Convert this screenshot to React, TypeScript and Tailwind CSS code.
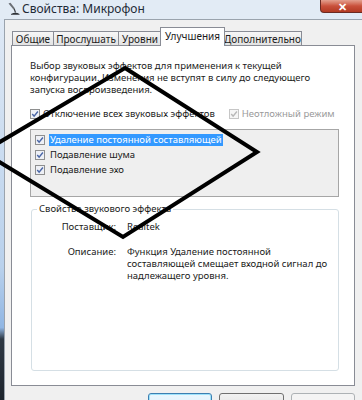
const Check = ({ disabled = false }: { disabled?: boolean }) => (
  <svg width="10" height="10" viewBox="0 0 10 10" className="shrink-0">
    <rect
      x="0.5"
      y="0.5"
      width="9"
      height="9"
      fill={disabled ? "#f6f6f6" : "#eef0f5"}
      stroke={disabled ? "#c6c6c6" : "#8e8f8f"}
    />
    <path
      d="M2.2 5.1 L4.1 7.1 L7.9 2.5"
      fill="none"
      stroke={disabled ? "#b8b8b8" : "#4a66a6"}
      strokeWidth="1.4"
    />
  </svg>
);

const MicIcon = () => (
  <svg width="13" height="13" viewBox="0 0 13 13">
    <path d="M1.5 1.5 L3.5 0.8 L8 6.5 L6.5 7.5 Z" fill="#6b6f75" />
    <path d="M7.2 7 L8.5 10.5" stroke="#3a3d42" strokeWidth="1.2" />
    <path d="M4 12 Q8.5 9.5 12.5 12 L12.5 12.8 L4 12.8 Z" fill="#2f3237" />
  </svg>
);

const tabs = [
  { label: "Общие", cls: "w-[42px] h-[15px] bg-gradient-to-b from-[#f6f6f6] to-[#e3e3e3]" },
  { label: "Прослушать", cls: "w-[66px] h-[15px] -ml-px bg-gradient-to-b from-[#f6f6f6] to-[#e3e3e3]" },
  { label: "Уровни", cls: "w-[44px] h-[15px] -ml-px bg-gradient-to-b from-[#f6f6f6] to-[#e3e3e3]" },
  { label: "Улучшения", cls: "w-[65px] h-[19px] -ml-[2px] bg-white border-b-0 z-10 pb-[3px]" },
  { label: "Дополнительно", cls: "w-[79px] h-[15px] -ml-[2px] bg-gradient-to-b from-[#f6f6f6] to-[#e3e3e3]" },
];

export default function App() {
  return (
    <div className="relative w-[362px] h-[400px] overflow-hidden bg-[#e2ebf5] font-['Noto_Sans',sans-serif] text-[9.5px] leading-[12px] text-[#1b1b1b]">
      {/* title bar */}
      <div className="flex h-[19px] items-start">
        <div className="ml-[7px] mt-[2px]">
          <MicIcon />
        </div>
        <div className="ml-[2px] mt-px text-[12px] leading-[15px] text-[#1e2a36]">
          Свойства: Микрофон
        </div>
        <div className="ml-auto -mr-[3px] flex h-[13px] w-[45px] items-center justify-center rounded-b-[4px] border border-t-0 border-[#6b2a22] bg-gradient-to-b from-[#e3a08f] via-[#c9503b] to-[#b23a22]">
          <span className="text-[11px] leading-[11px] font-bold text-white">✕</span>
        </div>
      </div>

      <div className="flex h-[381px]">
        <div className="w-[4px] bg-[linear-gradient(to_bottom,#dfe9f5_0%,#b9d1ec_65%,#90b6e3_81%,#2e3843_84%,#1d242d_100%)]" />
        <div className="flex-1 border-l border-t border-[#9aa3ad] bg-[#f0f0f0] pl-[6px] pt-[7px]">
          {/* tabs */}
          <div className="flex items-end pl-px">
            {tabs.map((t) => (
              <div
                key={t.label}
                className={`relative flex items-center justify-center border border-[#898c95] text-[10px] ${t.cls}`}
              >
                {t.label}
              </div>
            ))}
          </div>

          {/* panel */}
          <div className="-mt-px h-[341px] w-[344px] border border-[#898c95] bg-white pl-[18px] pt-[14px]">
            <div>
              Выбор звуковых эффектов для применения к текущей
              <br />
              конфигурации. Изменения не вступят в силу до следующего
              <br />
              запуска воспроизведения.
            </div>

            <div className="mt-[11px] flex h-[13px] items-center">
              <Check />
              <span className="ml-[3px]">Отключение всех звуковых эффектов</span>
              <span className="ml-[14px]">
                <Check disabled />
              </span>
              <span className="ml-[3px] text-[#9a9a9a]">Неотложный режим</span>
            </div>

            <div className="mt-[9px] h-[68px] w-[309px] border border-[#a6a6a6] bg-[#efefef] pl-[4px] pt-[2px]">
              <div className="flex h-[15px] items-center">
                <Check />
                <span className="ml-[4px] flex h-[12px] items-center bg-[#3399ff] px-[1px] text-white">
                  Удаление постоянной составляющей
                </span>
              </div>
              <div className="flex h-[15px] items-center">
                <Check />
                <span className="ml-[5px]">Подавление шума</span>
              </div>
              <div className="flex h-[15px] items-center">
                <Check />
                <span className="ml-[5px]">Подавление эхо</span>
              </div>
            </div>

            <fieldset className="mt-[6px] ml-px h-[168px] w-[308px] rounded-[3px] border border-[#d5dfe5]">
              <legend className="ml-[5px] px-[2px]">Свойства звукового эффекта</legend>
              <div className="mt-[6px] grid grid-cols-[84px_1fr] gap-x-[11px] gap-y-[13px]">
                <div className="text-right">Поставщик:</div>
                <div>Realtek</div>
                <div className="text-right">Описание:</div>
                <div>
                  Функция Удаление постоянной
                  <br />
                  составляющей смещает входной сигнал до
                  <br />
                  надлежащего уровня.
                </div>
              </div>
            </fieldset>
          </div>

          {/* buttons */}
          <div className="mt-[7px] flex w-[344px] justify-end gap-[7px] text-[10px]">
            <div className="flex h-[22px] w-[64px] items-center justify-center rounded-[3px] border border-[#3c7fb1] bg-gradient-to-b from-[#eaf6fd] to-[#d9f0fc] shadow-[inset_0_0_0_1px_#9ee2fb]">
              ОК
            </div>
            <div className="flex h-[22px] w-[65px] items-center justify-center rounded-[3px] border border-[#707070] bg-gradient-to-b from-[#f2f2f2] to-[#dddddd]">
              Отмена
            </div>
            <div className="flex h-[22px] w-[64px] items-center justify-center rounded-[3px] border border-[#adb2b5] bg-[#f4f4f4] text-[#838383]">
              Применить
            </div>
          </div>
        </div>
      </div>

      {/* hand-drawn diamond annotation over the dialog */}
      <svg className="pointer-events-none absolute inset-0" width="362" height="400" viewBox="0 0 362 400">
        <polygon
          points="125,68 257,152 123,237 -17,152"
          fill="none"
          stroke="#000"
          strokeWidth="4"
          strokeLinejoin="miter"
        />
      </svg>
    </div>
  );
}
